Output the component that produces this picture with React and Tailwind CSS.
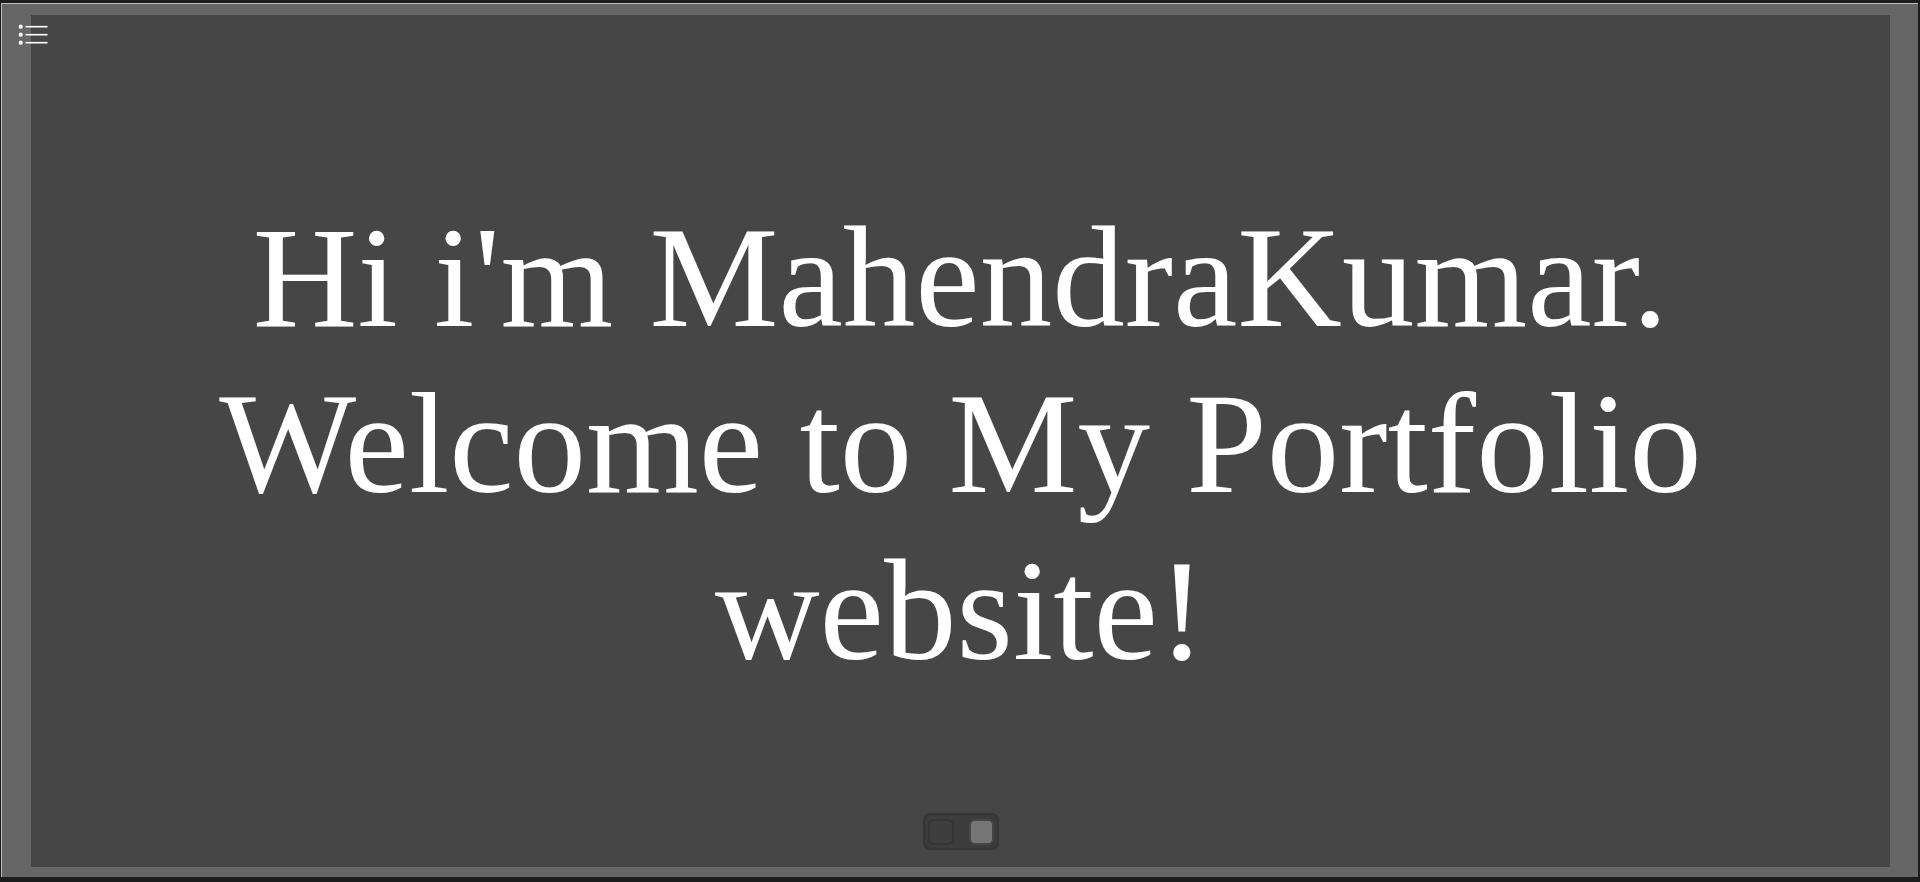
export default function App() {
  return (
    <div className="h-[882px] w-[1920px] bg-[#1c1c1c] pt-[3px] pb-[5px] pl-px pr-[2px] overflow-hidden">
      <div className="relative h-full w-full bg-[#666666] border-t border-l border-[#bdbdbd] pl-[29px] pr-[28px] pt-[11px] pb-[10px]">
        <button className="absolute left-[15px] top-[18px] w-[32px] h-[26px] flex items-center justify-center">
          <svg width="32" height="26" viewBox="0 0 32 26">
            <g fill="#ffffff">
              <circle cx="3.7" cy="4.7" r="2.1" />
              <circle cx="3.7" cy="12.7" r="2.1" />
              <circle cx="3.7" cy="20.7" r="2.1" />
            </g>
            <g stroke="#ffffff" strokeWidth="1.6">
              <line x1="8.5" y1="4.7" x2="30.5" y2="4.7" />
              <line x1="8.5" y1="12.7" x2="30.5" y2="12.7" />
              <line x1="8.5" y1="20.7" x2="30.5" y2="20.7" />
            </g>
          </svg>
        </button>
        <div className="h-full w-full bg-[#464646] flex flex-col items-center">
          <div className="flex-1 flex items-center justify-center pt-[59px]">
            <h1 className="text-white text-center text-[145px] leading-[1.148] font-normal font-['Liberation_Serif',_'Times_New_Roman',_serif]">
              Hi i'm MahendraKumar.
              <br />
              Welcome to My Portfolio
              <br />
              website!
            </h1>
          </div>
          <div className="mb-[17px] w-[76px] h-[37px] rounded-[7px] bg-[#3c3c3c] border-2 border-[#363636] flex items-center justify-between px-[3px]">
            <div className="w-[26px] h-[26px] rounded-[6px] bg-[#3e3e3e] border-2 border-[#353535]" />
            <div className="w-[25px] h-[26px] rounded-[6px] bg-[#767676] border-2 border-[#454545]" />
          </div>
        </div>
      </div>
    </div>
  );
}
